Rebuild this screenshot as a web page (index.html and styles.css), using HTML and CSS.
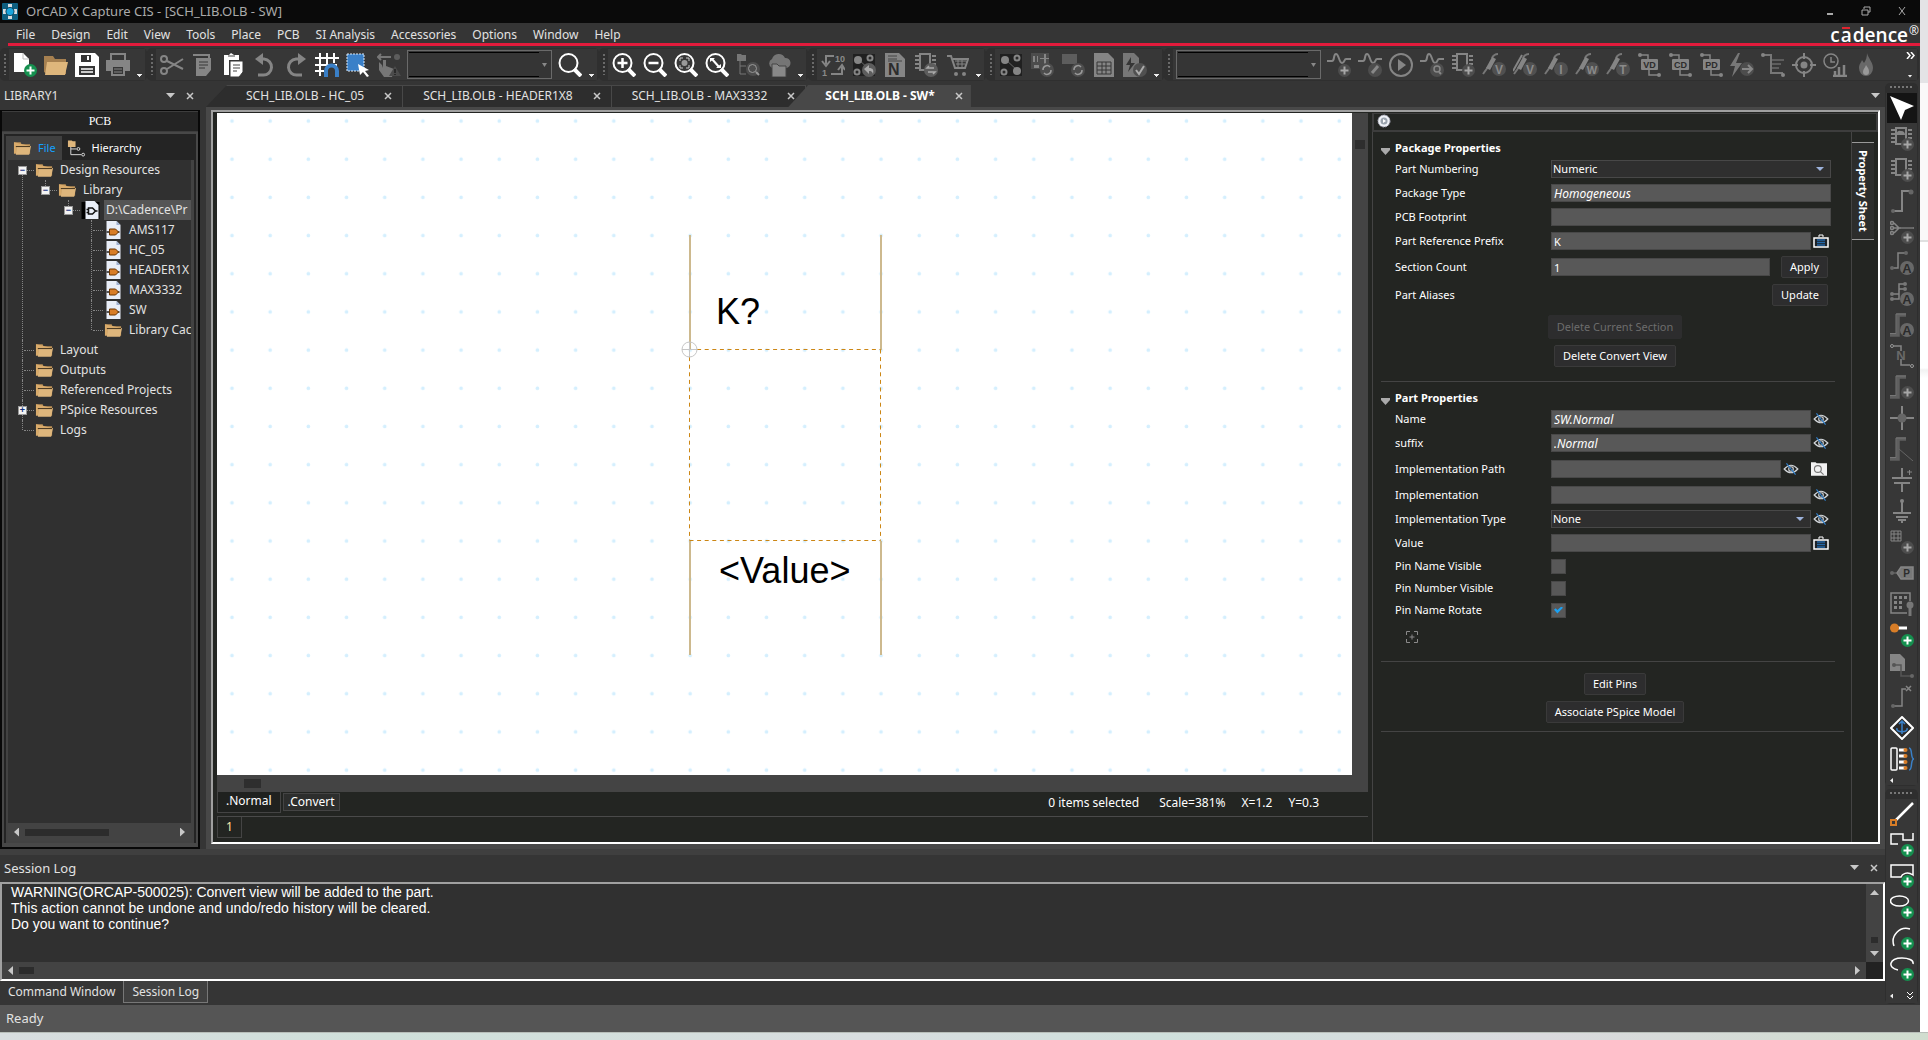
FILE: index.html
```html
<!DOCTYPE html>
<html lang="en">
<head>
<meta charset="utf-8">
<title>OrCAD X Capture CIS - [SCH_LIB.OLB - SW]</title>
<link rel="stylesheet" href="styles.css">
</head>
<body>
<svg class="sprite" aria-hidden="true">
  <defs>
    <symbol id="plus-badge" viewBox="0 0 24 24"><circle cx="17.5" cy="17.500" r="6.500" fill="#4d4d4d"/><path d="M17.500 13.500v8M13.500 17.500h8" stroke="#a6a6a6" stroke-width="2"/></symbol>
    <symbol id="green-badge" viewBox="0 0 24 24"><circle cx="17.500" cy="17.500" r="6.500" fill="#15904f"/><path d="M17.500 13.500v8M13.500 17.500h8" stroke="#fff" stroke-width="2"/></symbol>
    <symbol id="folder" viewBox="0 0 20 16"><path d="M1 2h7l1 2h9v10H3z" fill="#b98f55"/><path d="M1 2v12h2L4 6h14" fill="#d9ab6b"/><path d="M4 6h15l-2 9H3z" fill="#deb67c"/><path d="M3 6.500h15" stroke="#3a2c18"/></symbol>
    <symbol id="i-new" viewBox="0 0 24 24"><path d="M1 0h9l6 6v13H1z" fill="#fff"/><path d="M10 0v6h6" stroke="#bbb" fill="none"/><use href="#green-badge"/></symbol>
    <symbol id="i-open" viewBox="0 0 24 24"><path d="M0 3h9l2 3h11v15H3L0 19z" fill="#a68050"/><path d="M3 9h21l-3 13H1z" fill="#deb67c"/></symbol>
    <symbol id="i-save" viewBox="0 0 24 24"><path d="M0 0h20l4 4v20H0z" fill="#fff"/><path d="M6 2h10v7H6zM4 13h16v9H4z" fill="#363636"/><path d="M12 3h2v4h-2z" fill="#fff"/><path d="M6 16h12M6 19h12" stroke="#fff" stroke-width="1.500"/></symbol>
    <symbol id="i-print" viewBox="0 0 24 24"><path d="M5 7V1h14v6M1 8h22v9h-4v-4H5v4H1z" fill="none" stroke="#858585" stroke-width="2"/><path d="M1 8h22v8H1z" fill="#858585"/><path d="M6 13h12v9H6z" fill="#363636" stroke="#858585" stroke-width="2"/><path d="M8 16h8M8 19h8" stroke="#858585"/></symbol>
    <symbol id="i-cut" viewBox="0 0 24 24"><g fill="none" stroke="#858585" stroke-width="2"><circle cx="4" cy="6" r="3"/><circle cx="4" cy="18" r="3"/><path d="M7 8l16 8M7 16L23 6"/></g></symbol>
    <symbol id="i-copy" viewBox="0 0 24 24"><path d="M2 1h17v17h-2V3H2zM5 5h15v12l-5 6H5z" fill="#858585"/><path d="M8 9h9M8 12h9M8 15h6" stroke="#363636"/></symbol>
    <symbol id="i-paste" viewBox="0 0 24 24"><path d="M2 2h5l2-2 3 2h5v5H7v15H2z" fill="#fff"/><path d="M8 8h13v11l-4 5H8z" fill="#fff" stroke="#363636"/><path d="M6 3h7M11 12h7M11 15h7M11 18h4" stroke="#444"/></symbol>
    <symbol id="i-undo" viewBox="0 0 24 24"><path d="M5 22h5a8 8 0 0 0 1-16H8" fill="none" stroke="#858585" stroke-width="3"/><path d="M10 0v12L2 6z" fill="#858585"/></symbol>
    <symbol id="i-redo" viewBox="0 0 24 24"><path d="M18 22h-5a8 8 0 0 1-1-16h3" fill="none" stroke="#858585" stroke-width="3"/><path d="M14 0v12l8-6z" fill="#858585"/></symbol>
    <symbol id="i-grid" viewBox="0 0 24 24"><path d="M5 0v23M12 0v12M19 0v10M0 5h24M0 12h22M0 18h9" stroke="#fff" stroke-width="2"/><path d="M11 24v-6a5.500 5.500 0 0 1 11 0v6" fill="none" stroke="#3a80c8" stroke-width="4"/></symbol>
    <symbol id="i-select" viewBox="0 0 24 24"><path d="M1 1h17v17H1z" fill="#3a80c8" stroke="#dce9f6" stroke-dasharray="2 1"/><path d="M12 11l11 6-4 1 4 5-2 1-4-5-3 3z" fill="#fff"/></symbol>
    <symbol id="i-hand" viewBox="0 0 24 24"><path d="M5 12l-3-3v8l5 7h8l2-8-8-3V7H6v8z" fill="#777"/><path d="M1 4h13M4 1L1 4l3 3" stroke="#777" stroke-width="2" fill="none"/><circle cx="20" cy="4" r="3" fill="#5d5d5d"/><path d="M18 13l6 10H12z" fill="#4b4b4b"/><path d="M18 16v4M18 21v1" stroke="#2a2a2a" stroke-width="2"/></symbol>
    <symbol id="lens" viewBox="0 0 24 24"><circle cx="10.500" cy="10" r="9" fill="none" stroke="#fff" stroke-width="2"/><path d="M16 16l7 7" stroke="#fff" stroke-width="4"/></symbol>
    <symbol id="i-zin" viewBox="0 0 24 24"><use href="#lens"/><path d="M10.500 5v10M5.500 10h10" stroke="#fff" stroke-width="2.500"/></symbol>
    <symbol id="i-zout" viewBox="0 0 24 24"><use href="#lens"/><path d="M5.500 10h10" stroke="#fff" stroke-width="2.500"/></symbol>
    <symbol id="i-zarea" viewBox="0 0 24 24"><use href="#lens"/><path d="M6 8V5h3M12 5h3v3M15 12v3h-3M9 15H6v-3" fill="none" stroke="#ccc"/><circle cx="10.500" cy="10" r="3" fill="#999"/></symbol>
    <symbol id="i-zall" viewBox="0 0 24 24"><use href="#lens"/><path d="M7 6l7 8" stroke="#fff" stroke-width="2"/><path d="M5 5h5L5 9zM16 15h-5l5-4z" fill="#fff"/></symbol>
    <symbol id="i-hier" viewBox="0 0 24 24"><path d="M1 1h4l1 1h4v6H1z" fill="#777"/><path d="M4 8v13h6M4 13h6" fill="none" stroke="#777"/><circle cx="17" cy="16" r="7" fill="#4d4d4d"/><circle cx="16.500" cy="15.500" r="4" fill="none" stroke="#999"/><path d="M20 19l3 3" stroke="#999" stroke-width="2"/></symbol>
    <symbol id="i-cloud" viewBox="0 0 24 24"><path d="M5 15a5 5 0 0 1 0-9 7 7 0 0 1 13-1 5 5 0 0 1 1 10z" fill="#757575"/><path d="M5 11h5l2 2h7v11H5z" fill="#888" stroke="#444"/></symbol>
    <symbol id="i-annot" viewBox="0 0 24 24"><path d="M13 3H5v8M1 8l4 5 4-5M10 21h11v-7M17 17l4-5 3 5" fill="none" stroke="#858585" stroke-width="2"/><text x="14" y="9" class="glyph" font-size="9">10</text><text x="1" y="23" class="glyph" font-size="9">1</text></symbol>
    <symbol id="nodes" viewBox="0 0 24 24"><path d="M1 1h22v22H1z" fill="#202020"/><path d="M6 6l13 12" stroke="#666"/><g fill="#858585"><circle cx="6" cy="7" r="4"/><circle cx="18" cy="18" r="4"/></g><g fill="#292929" stroke="#858585" stroke-width="2"><circle cx="18" cy="5" r="2.500"/><circle cx="5" cy="19" r="2.500"/></g></symbol>
    <symbol id="i-back" viewBox="0 0 24 24"><use href="#nodes"/><circle cx="17" cy="17" r="7" fill="#5d5d5d"/><path d="M12 16l5-4v3c4 0 5 2 4 6-1-3-2-3-4-3v3z" fill="#aaa"/></symbol>
    <symbol id="i-netlist" viewBox="0 0 24 24"><path d="M2 0h14l6 6v18H2z" fill="#858585"/><path d="M5 3h9M5 6h9M5 8h14" stroke="#444"/><text x="5" y="22" class="glyph dark" font-size="16">N</text></symbol>
    <symbol id="chip" viewBox="0 0 24 24"><path d="M6 1h10v16H6zM1 3h4M1 7h4M1 11h4M1 15h4M18 3h4M18 7h4M18 11h4" fill="none" stroke="#858585" stroke-width="2"/></symbol>
    <symbol id="i-swap" viewBox="0 0 24 24"><use href="#chip"/><circle cx="17" cy="17" r="7" fill="#5d5d5d"/><path d="M20 15h-7l2-2M14 19h7l-2 2" fill="none" stroke="#aaa" stroke-width="1.500"/></symbol>
    <symbol id="i-cart" viewBox="0 0 24 24"><path d="M2 3h4l4 12h10l3-9H8" fill="none" stroke="#858585" stroke-width="2"/><path d="M10 8h11M11 11h9M13 7v7M17 7v7" stroke="#858585"/><circle cx="11" cy="21" r="2" fill="#858585"/><circle cx="19" cy="21" r="2" fill="#858585"/></symbol>
    <symbol id="i-sync1" viewBox="0 0 24 24"><path d="M1 0h18v16H1z" fill="#4c4c4c"/><path d="M3 3h2v6H3zM7 3h1v6H7zM10 5h9v1h-9zM14 1h2v10h-2zM4 12h5v3H4z" fill="#858585"/><use href="#refresh"/></symbol>
    <symbol id="i-sync2" viewBox="0 0 24 24"><path d="M1 1h15v10H1z" fill="#5d5d5d"/><use href="#refresh"/></symbol>
    <symbol id="refresh" viewBox="0 0 24 24"><circle cx="17" cy="17" r="7" fill="#4d4d4d"/><path d="M13 17a4 4 0 0 1 7-3M21 17a4 4 0 0 1-7 3" fill="none" stroke="#999" stroke-width="1.500"/></symbol>
    <symbol id="i-sheet" viewBox="0 0 24 24"><path d="M2 0h14l6 6v18H2z" fill="#858585"/><path d="M5 9h14v12H5zM5 13h14M5 17h14M10 9v12M14 9v12" fill="none" stroke="#363636"/></symbol>
    <symbol id="i-erc" viewBox="0 0 24 24"><path d="M0 0h11l5 5v19H0z" fill="#777"/><path d="M8 4l-5 8h4l-2 7 7-9H8z" fill="#363636"/><circle cx="17" cy="17" r="7" fill="#505050"/><path d="M13 17l3 4 5-8" fill="none" stroke="#aaa" stroke-width="2"/></symbol>
    <symbol id="wave" viewBox="0 0 24 24"><path d="M0 8h5C8 8 6 1 9 1s3 9 6 9 2-4 4-4h5" fill="none" stroke="#858585" stroke-width="2"/></symbol>
    <symbol id="i-wplus" viewBox="0 0 24 24"><use href="#wave"/><use href="#plus-badge"/></symbol>
    <symbol id="i-wedit" viewBox="0 0 24 24"><use href="#wave"/><circle cx="17" cy="17" r="7" fill="#4d4d4d"/><path d="M14 20l6-7" stroke="#888" stroke-width="3"/></symbol>
    <symbol id="i-play" viewBox="0 0 24 24"><circle cx="12" cy="12" r="11" fill="none" stroke="#858585" stroke-width="2"/><path d="M9 6v12l8-6z" fill="#858585"/></symbol>
    <symbol id="i-wfind" viewBox="0 0 24 24"><use href="#wave"/><circle cx="17" cy="17" r="7" fill="#4d4d4d"/><circle cx="17" cy="16" r="3" fill="none" stroke="#888" stroke-width="1.500"/><path d="M19 19l2 2" stroke="#888" stroke-width="2"/></symbol>
    <symbol id="i-chip" viewBox="0 0 24 24"><use href="#chip"/><use href="#plus-badge"/></symbol>
    <symbol id="i-chipcloud" viewBox="0 0 24 24"><use href="#chip"/><path d="M7 8a3 3 0 0 1 4-4c3 0 4 2 4 4z" fill="#858585"/><use href="#plus-badge"/></symbol>
    <symbol id="probe" viewBox="0 0 24 24"><path d="M1 21l5-7M16 1c-3 0-5 2-6 4" fill="none" stroke="#777" stroke-width="2"/><path d="M10 4l4 2-6 11-4-2z" fill="#858585"/><circle cx="17" cy="16" r="7" fill="#505050"/></symbol>
    <symbol id="i-pv" viewBox="0 0 24 24"><use href="#probe"/><text x="17" y="20.500" class="glyph mid" font-size="12">V</text></symbol>
    <symbol id="i-pvv" viewBox="0 0 24 24"><path d="M0 18l9-16" stroke="#858585" stroke-width="2"/><use href="#probe"/><text x="17" y="20.500" class="glyph mid" font-size="12">V</text></symbol>
    <symbol id="i-pi" viewBox="0 0 24 24"><use href="#probe"/><text x="17" y="20.500" class="glyph mid" font-size="12">I</text></symbol>
    <symbol id="i-pw" viewBox="0 0 24 24"><use href="#probe"/><text x="17" y="20.500" class="glyph mid" font-size="11">W</text></symbol>
    <symbol id="i-pt" viewBox="0 0 24 24"><use href="#probe"/><text x="17" y="20.500" class="glyph mid" font-size="12">T</text></symbol>
    <symbol id="disp" viewBox="0 0 24 24"><path d="M3 2h8v4M12 17v5h9" fill="none" stroke="#858585" stroke-width="1.500"/><circle cx="3" cy="2" r="2" fill="#858585"/><circle cx="22" cy="22" r="2" fill="#858585"/><rect x="4" y="6" width="17" height="11" rx="1" fill="#858585"/></symbol>
    <symbol id="i-vd" viewBox="0 0 24 24"><use href="#disp"/><text x="12.500" y="15" class="glyph dark mid" font-size="9">VD</text></symbol>
    <symbol id="i-cd" viewBox="0 0 24 24"><use href="#disp"/><text x="12.500" y="15" class="glyph dark mid" font-size="9">CD</text></symbol>
    <symbol id="i-pd" viewBox="0 0 24 24"><use href="#disp"/><text x="12.500" y="15" class="glyph dark mid" font-size="9">PD</text></symbol>
    <symbol id="i-bolt" viewBox="0 0 24 24"><path d="M8 0L0 13h5L2 24l10-14H6l4-10z" fill="#777"/><circle cx="17" cy="16" r="7" fill="#4d4d4d"/><path d="M12 16h9M18 12l4 4-4 4" fill="none" stroke="#888" stroke-width="2"/></symbol>
    <symbol id="i-net" viewBox="0 0 24 24"><path d="M2 2h8v18h12" fill="none" stroke="#777" stroke-width="2"/><path d="M11 7h12M11 11h9M11 15h7" stroke="#5d5d5d" stroke-width="2"/><circle cx="2" cy="2" r="2" fill="#858585"/><circle cx="22" cy="22" r="2" fill="#858585"/></symbol>
    <symbol id="i-target" viewBox="0 0 24 24"><circle cx="12" cy="12" r="8" fill="none" stroke="#858585" stroke-width="2"/><circle cx="12" cy="12" r="3.500" fill="#858585"/><path d="M12 0v6M12 18v6M0 12h6M18 12h6" stroke="#858585" stroke-width="2"/></symbol>
    <symbol id="i-clock" viewBox="0 0 24 24"><circle cx="8" cy="8" r="7" fill="none" stroke="#858585" stroke-width="1.500"/><path d="M8 4v5h4" fill="none" stroke="#858585" stroke-width="1.500"/><path d="M10 23h14M12 22v-4M16 22v-8M21 22V12" stroke="#858585" stroke-width="2.500"/></symbol>
    <symbol id="i-flame" viewBox="0 0 24 24"><path d="M13 0c1 5 6 9 6 15a7 8 0 0 1-14 0c0-4 2-5 3-8l2 3c2-3 3-6 3-10z" fill="#686868"/><path d="M12 12c2 3 3 4 3 7a3 3 0 0 1-6 0c0-3 2-4 3-7z" fill="#999"/></symbol>
    <symbol id="i-arrow" viewBox="0 0 24 24"><path d="M0 0l24 10-9 4-4 10z" fill="#fff"/></symbol>
    <symbol id="i-wire" viewBox="0 0 24 24"><path d="M3 22h9V2h8" fill="none" stroke="#858585" stroke-width="2"/><circle cx="3" cy="22" r="2" fill="#666"/><circle cx="21" cy="3" r="2.500" fill="#666"/></symbol>
    <symbol id="i-autowire" viewBox="0 0 24 24"><g fill="none" stroke="#858585" stroke-width="1.500"><circle cx="2" cy="3" r="1.500"/><circle cx="2" cy="8" r="1.500"/><circle cx="2" cy="13" r="1.500"/><path d="M4 3l5 5-5 5M3 8h21"/></g><path d="M11 8h12" stroke="#666" stroke-width="2"/><use href="#plus-badge"/></symbol>
    <symbol id="a-badge" viewBox="0 0 24 24"><circle cx="17" cy="17" r="7" fill="#686868"/><text x="17" y="21.500" class="glyph dark mid" font-size="13">A</text></symbol>
    <symbol id="i-wa" viewBox="0 0 24 24"><path d="M1 17h7V2h8" fill="none" stroke="#858585" stroke-width="1.500"/><circle cx="16" cy="2" r="2" fill="#666"/><circle cx="2" cy="17" r="2" fill="#666"/><use href="#a-badge"/></symbol>
    <symbol id="i-waa" viewBox="0 0 24 24"><path d="M2 17h7V2h6M2 12h7M9 7h6" fill="none" stroke="#858585" stroke-width="1.500"/><circle cx="15" cy="2" r="2" fill="#777"/><circle cx="15" cy="7" r="2" fill="#777"/><circle cx="2" cy="12" r="2" fill="#777"/><circle cx="2" cy="17" r="2" fill="#777"/><use href="#a-badge"/></symbol>
    <symbol id="bus" viewBox="0 0 24 24"><path d="M0 22h8V2h8" fill="none" stroke="#5f5f5f" stroke-width="3.500"/><path d="M0 20.500h6V1h10" fill="none" stroke="#777"/></symbol>
    <symbol id="i-busa" viewBox="0 0 24 24"><use href="#bus"/><use href="#a-badge"/></symbol>
    <symbol id="i-nn" viewBox="0 0 24 24"><path d="M4 2h7v5M11 15v6h9" fill="none" stroke="#858585" stroke-width="1.500"/><g fill="none" stroke="#999"><circle cx="2" cy="2" r="1.500"/><circle cx="22" cy="22" r="1.500"/></g><text x="11" y="16" class="glyph mid" font-size="13" opacity=".6">N</text></symbol>
    <symbol id="i-busp" viewBox="0 0 24 24"><use href="#bus"/><use href="#plus-badge"/></symbol>
    <symbol id="i-junc" viewBox="0 0 24 24"><path d="M12 0v24M0 12h24" stroke="#858585" stroke-width="2"/><circle cx="12" cy="12" r="4.500" fill="#666"/></symbol>
    <symbol id="i-busentry" viewBox="0 0 24 24"><use href="#bus"/><path d="M9 12l14 12" stroke="#666"/></symbol>
    <symbol id="i-power" viewBox="0 0 24 24"><path d="M12 0v10M12 15v9M2 10h20M4 15h16" stroke="#858585" stroke-width="2"/><path d="M17 4h5M19.500 2v5" stroke="#858585"/></symbol>
    <symbol id="i-ground" viewBox="0 0 24 24"><path d="M12 2v12M3 14h18M6 18h12M8 21h8M11 23h2" stroke="#858585" stroke-width="2"/><circle cx="12" cy="2" r="2" fill="#858585"/></symbol>
    <symbol id="i-block" viewBox="0 0 24 24"><path d="M1 1h10v10H1zM1 4h10M1 8h10M4 1v10M8 1v10" fill="none" stroke="#858585"/><use href="#plus-badge"/></symbol>
    <symbol id="i-port" viewBox="0 0 24 24"><path d="M7 12l4-6h12v12H11z" fill="#787878" stroke="#858585" stroke-width="1.500"/><path d="M3 12h4" stroke="#777"/><circle cx="2" cy="12" r="2" fill="#666"/><text x="16.500" y="15.500" class="glyph dark mid" font-size="10">P</text></symbol>
    <symbol id="i-hpin" viewBox="0 0 24 24"><path d="M20 9V1H1v20h16" fill="none" stroke="#858585" stroke-width="1.500"/><g fill="#858585"><path d="M4 4h3v3H4zM9 4h3v3H9zM14 4h3v3h-3zM4 9h3v3H4zM9 9h3v3H9zM4 14h3v3H4zM9 14h3v3H9z"/></g><circle cx="20" cy="13" r="3.500" fill="#777"/><path d="M20 13v11" stroke="#777" stroke-width="3"/></symbol>
    <symbol id="i-pin" viewBox="0 0 24 24"><path d="M4 5h13" stroke="#fff" stroke-width="3"/><circle cx="4.500" cy="5" r="4.500" fill="#d87d27"/><use href="#green-badge"/></symbol>
    <symbol id="i-offpage" viewBox="0 0 24 24"><path d="M0 0h10l5 5v12H0z" fill="#858585"/><path d="M4 11h7v11h10" fill="none" stroke="#555" stroke-width="1.500"/><circle cx="4" cy="11" r="2" fill="#555"/><circle cx="22" cy="22" r="2" fill="#666"/></symbol>
    <symbol id="i-nc" viewBox="0 0 24 24"><path d="M3 21h9V4h4" fill="none" stroke="#858585" stroke-width="1.500"/><circle cx="3" cy="21" r="2" fill="#666"/><path d="M16 1l5 5M21 1l-5 5" stroke="#858585" stroke-width="1.500"/></symbol>
    <symbol id="i-ieee" viewBox="0 0 24 24"><path d="M12 1l11 11-11 11L1 12z" fill="#292929" stroke="#fff" stroke-width="2"/><path d="M12 5v13M9 8l3-3 3 3M7 12c-2 5 12 5 10 0" fill="none" stroke="#3a80c8" stroke-width="1.500"/></symbol>
    <symbol id="i-pinarr" viewBox="0 0 24 24"><rect x="1" y="1" width="6" height="22" rx="1" fill="none" stroke="#fff" stroke-width="1.500"/><path d="M9 3h6M9 9h6M9 15h6M9 21h6" stroke="#fff" stroke-width="3"/><g fill="#d87d27"><circle cx="15.500" cy="3" r="2"/><circle cx="15.500" cy="9" r="2"/><circle cx="15.500" cy="15" r="2"/><circle cx="15.500" cy="21" r="2"/></g><path d="M19 1c4 0 1 11 5 11-4 0-1 11-5 11" fill="none" stroke="#3a80c8" stroke-width="1.500"/></symbol>
    <symbol id="i-line" viewBox="0 0 24 24"><path d="M5 19L23 1" stroke="#fff" stroke-width="2.500"/><path d="M1 18h5v5H1z" fill="none" stroke="#d87d27" stroke-width="2"/></symbol>
    <symbol id="i-poly" viewBox="0 0 24 24"><path d="M8 11H1V1h12v6h10V0" fill="none" stroke="#fff" stroke-width="1.500"/><use href="#green-badge"/></symbol>
    <symbol id="i-rect" viewBox="0 0 24 24"><path d="M9 13H1V1h22v10c-6-4-11-1-12 2z" fill="none" stroke="#fff" stroke-width="1.500"/><use href="#green-badge"/></symbol>
    <symbol id="i-ell" viewBox="0 0 24 24"><ellipse cx="9.500" cy="6" rx="9" ry="5" fill="none" stroke="#fff" stroke-width="1.500"/><use href="#green-badge"/></symbol>
    <symbol id="i-arc" viewBox="0 0 24 24"><path d="M4 20A13 13 0 0 1 20 3" fill="none" stroke="#fff" stroke-width="1.500"/><use href="#green-badge"/></symbol>
    <symbol id="i-earc" viewBox="0 0 24 24"><path d="M8 13C-3 11-1 1 12 1c6 0 12 2 11 6" fill="none" stroke="#fff" stroke-width="1.500"/><use href="#green-badge"/></symbol>
    <symbol id="i-part" viewBox="0 0 16 18"><path d="M1 0h10l4 4v14H1z" fill="#e9eef8"/><path d="M11 0v4h4" fill="#9fb0cf"/><path d="M1 11h13" stroke="#222" stroke-width="1.500"/><path d="M4 8h6l3 3-3 3H4z" fill="#d87d27" stroke="#6b3500"/></symbol>
    <symbol id="i-lib" viewBox="0 0 18 18"><path d="M0 1h18v17H0z" fill="#000"/><path d="M4 0h9l4 4v14H4z" fill="#e9eef8"/><path d="M7 7v6h4l3-3-3-3zM5 8.500h2M5 11.500h2M13 10h3" fill="none" stroke="#111" stroke-width="1.500"/></symbol>
    <symbol id="i-tree" viewBox="0 0 20 18"><path d="M1 1h4l1 1h3v6H1z" fill="#deb67c"/><path d="M4 8v8h11M4 10h6" fill="none" stroke="#ddd"/><circle cx="12" cy="10" r="1.500" fill="none" stroke="#ddd"/><circle cx="17" cy="16" r="1.500" fill="none" stroke="#ddd"/></symbol>
    <symbol id="i-eye" viewBox="0 0 14 12"><path d="M1 6q6-6.500 12 0-6 6.500-12 0z" fill="none" stroke="#d0d4d8"/><circle cx="7" cy="6" r="2" fill="none" stroke="#d0d4d8"/><path d="M3 1l8 10" stroke="#2f7fca"/></symbol>
    <symbol id="i-case" viewBox="0 0 16 14"><path d="M1 4h14v9H1z" fill="#1d2328" stroke="#fff" stroke-width="1.500"/><path d="M6 3V1h4v2" fill="none" stroke="#fff"/><path d="M4 6h8M4 8.500h8M4 11h8" stroke="#2468a8" stroke-width="1.500"/></symbol>
    <symbol id="i-browse" viewBox="0 0 14 12"><path d="M0 0h4l1 1h9v11H0z" fill="#f2f2f2"/><circle cx="6" cy="6" r="3" fill="none" stroke="#777"/><path d="M8 8l3 3" stroke="#777"/></symbol>
    <symbol id="i-x" viewBox="0 0 8 8"><path d="M1 1l6 6M7 1L1 7" stroke="#c8c8c8" stroke-width="1.500"/></symbol>
  </defs>
</svg>

<div class="app">
  <header class="titlebar">
    <svg class="app-icon" viewBox="0 0 16 17"><rect width="16" height="17" rx="1" fill="#0e5f80"/><path d="M6 1h4v15H6zM1 6h14v5H1z" fill="#d8dde0"/><circle cx="8" cy="8.500" r="4.500" fill="#0b4560"/><circle cx="8" cy="8.500" r="3.500" fill="#19a5dd"/></svg>
    <h1>OrCAD X Capture CIS - [SCH_LIB.OLB - SW]</h1>
    <div class="win-buttons">
      <button aria-label="Minimize"><svg viewBox="0 0 10 10"><path d="M2 8h6" stroke="#aaa" stroke-width="2"/></svg></button>
      <button aria-label="Restore"><svg viewBox="0 0 10 10"><path d="M3 3V1h6v5H7M1 4h6v5H1z" fill="none" stroke="#aaa"/></svg></button>
      <button aria-label="Close"><svg viewBox="0 0 10 10"><path d="M2 1l6 8M8 1L2 9" stroke="#aaa"/></svg></button>
    </div>
  </header>

  <nav class="menubar">
    <button>File</button><button>Design</button><button>Edit</button><button>View</button><button>Tools</button><button>Place</button><button>PCB</button><button>SI Analysis</button><button>Accessories</button><button>Options</button><button>Window</button><button>Help</button>
    <span class="brand"><span>c</span><span class="macron">a</span><span>dence</span><sup>®</sup></span>
  </nav>

  <div class="toolbar">
    <div class="tgroup"><i class="grip"></i><div class="tools">
      <button aria-label="New"><svg><use href="#i-new"/></svg></button>
      <button aria-label="Open"><svg><use href="#i-open"/></svg></button>
      <button aria-label="Save"><svg><use href="#i-save"/></svg></button>
      <button aria-label="Print"><svg><use href="#i-print"/></svg></button>
      <i class="more"></i></div></div>
    <div class="tgroup"><i class="grip"></i><div class="tools">
      <button aria-label="Cut"><svg><use href="#i-cut"/></svg></button>
      <button aria-label="Copy"><svg><use href="#i-copy"/></svg></button>
      <button aria-label="Paste"><svg><use href="#i-paste"/></svg></button>
      <button aria-label="Undo"><svg><use href="#i-undo"/></svg></button>
      <button aria-label="Redo"><svg><use href="#i-redo"/></svg></button>
      <button aria-label="Snap to grid"><svg><use href="#i-grid"/></svg></button>
      <button aria-label="Area select"><svg><use href="#i-select"/></svg></button>
      <button aria-label="Drag connected object"><svg><use href="#i-hand"/></svg></button>
      <span class="combo"><select aria-label="Search text"><option></option></select></span>
      <button aria-label="Search"><svg><use href="#lens"/></svg></button>
      <i class="more"></i></div></div>
    <div class="tgroup"><i class="grip"></i><div class="tools">
      <button aria-label="Zoom in"><svg><use href="#i-zin"/></svg></button>
      <button aria-label="Zoom out"><svg><use href="#i-zout"/></svg></button>
      <button aria-label="Zoom to region"><svg><use href="#i-zarea"/></svg></button>
      <button aria-label="Zoom to all"><svg><use href="#i-zall"/></svg></button>
      <button aria-label="Find in hierarchy"><svg><use href="#i-hier"/></svg></button>
      <button aria-label="Workspace"><svg><use href="#i-cloud"/></svg></button>
      <i class="more"></i></div></div>
    <div class="tgroup"><i class="grip"></i><div class="tools">
      <button aria-label="Annotate"><svg><use href="#i-annot"/></svg></button>
      <button aria-label="Back annotate"><svg><use href="#i-back"/></svg></button>
      <button aria-label="Create netlist"><svg><use href="#i-netlist"/></svg></button>
      <button aria-label="Swap part"><svg><use href="#i-swap"/></svg></button>
      <button aria-label="Bill of materials"><svg><use href="#i-cart"/></svg></button>
      <i class="more"></i></div></div>
    <div class="tgroup"><i class="grip"></i><div class="tools">
      <button aria-label="New layout"><svg><use href="#nodes"/></svg></button>
      <button aria-label="Sync layout"><svg><use href="#i-sync1"/></svg></button>
      <button aria-label="Sync schematic"><svg><use href="#i-sync2"/></svg></button>
      <button aria-label="Properties table"><svg><use href="#i-sheet"/></svg></button>
      <button aria-label="Design rule check"><svg><use href="#i-erc"/></svg></button>
      <i class="more"></i></div></div>
    <div class="tgroup grow"><i class="grip"></i><div class="tools">
      <span class="combo"><select aria-label="Simulation profile"><option></option></select></span>
      <button aria-label="New simulation"><svg><use href="#i-wplus"/></svg></button>
      <button aria-label="Edit simulation"><svg><use href="#i-wedit"/></svg></button>
      <button aria-label="Run"><svg><use href="#i-play"/></svg></button>
      <button aria-label="View results"><svg><use href="#i-wfind"/></svg></button>
      <button aria-label="Place PSpice part"><svg><use href="#i-chip"/></svg></button>
      <button aria-label="Voltage marker"><svg><use href="#i-pv"/></svg></button>
      <button aria-label="Differential marker"><svg><use href="#i-pvv"/></svg></button>
      <button aria-label="Current marker"><svg><use href="#i-pi"/></svg></button>
      <button aria-label="Power marker"><svg><use href="#i-pw"/></svg></button>
      <button aria-label="Temperature marker"><svg><use href="#i-pt"/></svg></button>
      <button aria-label="Voltage display"><svg><use href="#i-vd"/></svg></button>
      <button aria-label="Current display"><svg><use href="#i-cd"/></svg></button>
      <button aria-label="Power display"><svg><use href="#i-pd"/></svg></button>
      <button aria-label="Bias points"><svg><use href="#i-bolt"/></svg></button>
      <button aria-label="Net list"><svg><use href="#i-net"/></svg></button>
      <button aria-label="Sensitivity"><svg><use href="#i-target"/></svg></button>
      <button aria-label="Time domain"><svg><use href="#i-clock"/></svg></button>
      <button aria-label="Smoke"><svg><use href="#i-flame"/></svg></button>
      <span class="overflow"><svg viewBox="0 0 9 7"><path d="M1 0l3 3.500L1 7M5 0l3 3.500L5 7" fill="none" stroke="#fff" stroke-width="1.500"/></svg><i></i></span></div></div>
  </div>

  <div class="body">
    <div class="work">
      <div class="upper">
        <aside class="library">
          <div class="dock-head"><span>LIBRARY1</span><i class="caret"></i><button aria-label="Close library"><svg><use href="#i-x"/></svg></button></div>
          <div class="lib-panel">
            <div class="lib-title">PCB</div>
            <div class="lib-body">
              <div class="lib-tabs">
                <button class="on"><svg><use href="#folder"/></svg>File</button>
                <button><svg><use href="#i-tree"/></svg>Hierarchy</button>
              </div>
              <div class="tree-box">
              <ul class="tree">
                <li><div class="node"><button class="exp" aria-label="Collapse">−</button><svg><use href="#folder"/></svg><span>Design Resources</span></div>
                  <ul><li><div class="node"><button class="exp" aria-label="Collapse">−</button><svg><use href="#folder"/></svg><span>Library</span></div>
                    <ul><li><div class="node"><button class="exp" aria-label="Collapse">−</button><svg><use href="#i-lib"/></svg><span class="sel">D:\Cadence\Pr</span></div>
                      <ul>
                        <li><div class="node"><svg><use href="#i-part"/></svg><span>AMS117</span></div></li>
                        <li><div class="node"><svg><use href="#i-part"/></svg><span>HC_05</span></div></li>
                        <li><div class="node"><svg><use href="#i-part"/></svg><span>HEADER1X</span></div></li>
                        <li><div class="node"><svg><use href="#i-part"/></svg><span>MAX3332</span></div></li>
                        <li><div class="node"><svg><use href="#i-part"/></svg><span>SW</span></div></li>
                        <li><div class="node"><svg><use href="#folder"/></svg><span>Library Cac</span></div></li>
                      </ul></li></ul></li></ul></li>
                <li><div class="node"><svg><use href="#folder"/></svg><span>Layout</span></div></li>
                <li><div class="node"><svg><use href="#folder"/></svg><span>Outputs</span></div></li>
                <li><div class="node"><svg><use href="#folder"/></svg><span>Referenced Projects</span></div></li>
                <li><div class="node"><button class="exp" aria-label="Expand">+</button><svg><use href="#folder"/></svg><span>PSpice Resources</span></div></li>
                <li><div class="node"><svg><use href="#folder"/></svg><span>Logs</span></div></li>
              </ul>
              <div class="hscroll"><i class="left"></i><b></b><i class="right"></i></div>
              </div>
            </div>
          </div>
        </aside>

        <main class="docs">
          <div class="doc-tabs">
            <div class="dtab first"><span>SCH_LIB.OLB - HC_05</span><button aria-label="Close tab"><svg><use href="#i-x"/></svg></button></div>
            <div class="dtab"><span>SCH_LIB.OLB - HEADER1X8</span><button aria-label="Close tab"><svg><use href="#i-x"/></svg></button></div>
            <div class="dtab"><span>SCH_LIB.OLB - MAX3332</span><button aria-label="Close tab"><svg><use href="#i-x"/></svg></button></div>
            <div class="dtab active"><span>SCH_LIB.OLB - SW*</span><button aria-label="Close tab"><svg><use href="#i-x"/></svg></button></div>
            <i class="caret"></i>
          </div>
          <div class="doc-frame">
            <section class="editor">
              <div class="canvas-row">
                <svg class="canvas">
                  <defs><pattern id="dots" x="-4" y="-11" width="38.180" height="38.180" patternUnits="userSpaceOnUse"><circle cx="19" cy="19" r="1.800" fill="#d4effe"/></pattern></defs>
                  <rect width="100%" height="100%" fill="#fff"/>
                  <rect width="100%" height="100%" fill="url(#dots)"/>
                  <path d="M473 122v115M664 122v115M473 428v114M664 428v114" stroke="#cdb98e" stroke-width="2"/>
                  <path d="M472.500 236.500h191M472.500 427.500h191M472.500 236.500v191M663.500 236.500v191" fill="none" stroke="#cc8614" stroke-dasharray="4 3.600"/>
                  <circle cx="472.500" cy="236.500" r="7.500" fill="none" stroke="#c6c6c6"/><path d="M465 236.500h15M472.500 229v15" stroke="#c6c6c6"/>
                  <text x="499" y="211">K?</text><text x="502" y="470">&lt;Value&gt;</text>
                </svg>
                <div class="canvas-v"><b></b></div>
              </div>
              <div class="canvas-h"><b></b></div>
              <div class="view-row">
                <button class="on">.Normal</button><button>.Convert</button>
                <div class="readout"><span>0 items selected</span><span>Scale=381%</span><span>X=1.2</span><span>Y=0.3</span></div>
              </div>
              <div class="page-row"><button>1</button></div>
            </section>

            <section class="props">
              <div class="props-head"><svg viewBox="0 0 14 14"><circle cx="7" cy="7" r="6" fill="#eef1f6" stroke="#aab" stroke-dasharray="2 1"/><circle cx="7" cy="7" r="3.500" fill="#9aa3ad"/><path d="M6 5v4l3-2z" fill="#fff"/></svg></div>
              <div class="props-main">
                <form class="form">
                  <h2>Package Properties</h2>
                  <div class="row"><label for="numbering">Part Numbering</label><span class="pick"><select id="numbering"><option>Numeric</option></select></span></div>
                  <div class="row"><label for="ptype">Package Type</label><input id="ptype" class="it" value="Homogeneous"></div>
                  <div class="row"><label for="foot">PCB Footprint</label><input id="foot"></div>
                  <div class="row"><label for="prefix">Part Reference Prefix</label><input id="prefix" value="K"><svg class="ic"><use href="#i-case"/></svg></div>
                  <div class="row tall"><label for="count">Section Count</label><input id="count" value="1"><button type="button" class="btn end">Apply</button></div>
                  <div class="row tall"><span class="lbl">Part Aliases</span><button type="button" class="btn end">Update</button></div>
                  <div class="mid-buttons"><button type="button" class="btn wide" disabled>Delete Current Section</button><button type="button" class="btn">Delete Convert View</button></div>
                  <hr>
                  <h2>Part Properties</h2>
                  <div class="row"><label for="name">Name</label><input id="name" class="it" value="SW.Normal"><svg class="ic"><use href="#i-eye"/></svg></div>
                  <div class="row"><label for="suffix">suffix</label><input id="suffix" class="it" value=".Normal"><svg class="ic"><use href="#i-eye"/></svg></div>
                  <div class="row tall"><label for="path">Implementation Path</label><input id="path"><svg class="ic"><use href="#i-eye"/></svg><svg class="ic far"><use href="#i-browse"/></svg></div>
                  <div class="row"><label for="impl">Implementation</label><input id="impl"><svg class="ic"><use href="#i-eye"/></svg></div>
                  <div class="row"><label for="itype">Implementation Type</label><span class="pick"><select id="itype"><option>None</option></select></span><svg class="ic"><use href="#i-eye"/></svg></div>
                  <div class="row"><label for="value">Value</label><input id="value"><svg class="ic"><use href="#i-case"/></svg></div>
                  <div class="row short"><label for="pnv">Pin Name Visible</label><input type="checkbox" id="pnv"></div>
                  <div class="row short"><label for="pnum">Pin Number Visible</label><input type="checkbox" id="pnum"></div>
                  <div class="row short"><label for="pnr">Pin Name Rotate</label><input type="checkbox" id="pnr" checked></div>
                  <button type="button" class="add" aria-label="Add property"><svg viewBox="0 0 12 12"><path d="M4 .500H.500V4M8 .500h3.500V4M4 11.500H.500V8M8 11.500h3.500V8M6 3.500v5M3.500 6h5" fill="none" stroke="#8a8a8a"/></svg></button>
                  <hr>
                  <div class="foot-buttons"><button type="button" class="btn">Edit Pins</button><button type="button" class="btn">Associate PSpice Model</button></div>
                  <hr class="long">
                </form>
                <div class="side"><button>Property Sheet</button></div>
              </div>
            </section>
          </div>
        </main>
      </div>

      <section class="session">
        <div class="dock-head"><span>Session Log</span><i class="caret"></i><button aria-label="Close log"><svg><use href="#i-x"/></svg></button></div>
        <div class="log">
          <div class="log-text">WARNING(ORCAP-500025): Convert view will be added to the part.<br>This action cannot be undone and undo/redo history will be cleared.<br>Do you want to continue?</div>
          <div class="vscroll"><i class="up"></i><b></b><i class="down"></i></div>
          <div class="hscroll"><i class="left"></i><b></b><i class="right"></i></div>
          <div class="corner"></div>
        </div>
        <div class="log-tabs"><button>Command Window</button><button class="on">Session Log</button></div>
      </section>
    </div>

    <aside class="palette">
      <div class="pgroup"><i class="vgrip"></i><div class="ptools">
        <button class="on" aria-label="Select"><svg><use href="#i-arrow"/></svg></button>
        <button aria-label="Search parts"><svg><use href="#i-chipcloud"/></svg></button>
        <button aria-label="Place part"><svg><use href="#i-chip"/></svg></button>
        <button aria-label="Place wire"><svg><use href="#i-wire"/></svg></button>
        <button aria-label="Auto wire"><svg><use href="#i-autowire"/></svg></button>
        <button aria-label="Net alias"><svg><use href="#i-wa"/></svg></button>
        <button aria-label="Net aliases"><svg><use href="#i-waa"/></svg></button>
        <button aria-label="Bus alias"><svg><use href="#i-busa"/></svg></button>
        <button aria-label="Net group"><svg><use href="#i-nn"/></svg></button>
        <button aria-label="Place bus"><svg><use href="#i-busp"/></svg></button>
        <button aria-label="Junction"><svg><use href="#i-junc"/></svg></button>
        <button aria-label="Bus entry"><svg><use href="#i-busentry"/></svg></button>
        <button aria-label="Power"><svg><use href="#i-power"/></svg></button>
        <button aria-label="Ground"><svg><use href="#i-ground"/></svg></button>
        <button aria-label="Hierarchical block"><svg><use href="#i-block"/></svg></button>
        <button aria-label="Port"><svg><use href="#i-port"/></svg></button>
        <button aria-label="Hierarchical pin"><svg><use href="#i-hpin"/></svg></button>
        <button aria-label="Place pin"><svg><use href="#i-pin"/></svg></button>
        <button aria-label="Off-page connector"><svg><use href="#i-offpage"/></svg></button>
        <button aria-label="No connect"><svg><use href="#i-nc"/></svg></button>
        <button aria-label="IEEE symbol"><svg><use href="#i-ieee"/></svg></button>
        <button aria-label="Pin array"><svg><use href="#i-pinarr"/></svg></button>
        <span class="pmore"><i></i></span></div></div>
      <div class="pgroup"><i class="vgrip"></i><div class="ptools">
        <button aria-label="Line"><svg><use href="#i-line"/></svg></button>
        <button aria-label="Polyline"><svg><use href="#i-poly"/></svg></button>
        <button aria-label="Rectangle"><svg><use href="#i-rect"/></svg></button>
        <button aria-label="Ellipse"><svg><use href="#i-ell"/></svg></button>
        <button aria-label="Arc"><svg><use href="#i-arc"/></svg></button>
        <button aria-label="Elliptical arc"><svg><use href="#i-earc"/></svg></button>
        <span class="pmore last"><i></i><svg viewBox="0 0 6 8"><path d="M0 0l3 3 3-3M0 4l3 3 3-3" fill="none" stroke="#fff"/></svg></span></div></div>
    </aside>
  </div>
  <footer class="status">Ready</footer>
</div>
<div class="behind-right"></div>
<div class="behind-bottom"></div>
</body>
</html>
```
FILE: styles.css
```css
* { box-sizing: border-box; }
body {
  margin: 0; min-height: 100vh; display: grid;
  grid-template: 1fr 8px / 1fr 8px;
  font: 12px/16px "Noto Sans", "Open Sans", sans-serif; color: #e2e2e2; background: #fff;
}
button { background: none; border: 0; padding: 0; color: inherit; font: inherit; display: flex; align-items: center; justify-content: center; }
input, select { font: inherit; color: inherit; margin: 0; border-radius: 0; appearance: none; }
svg { display: block; flex: none; }
h1, h2 { margin: 0; font: inherit; }
ul { margin: 0; padding: 0; list-style: none; }
.sprite { position: absolute; width: 0; height: 0; }
.glyph { font-family: "Liberation Sans", sans-serif; font-weight: bold; fill: #8a8a8a; }
.glyph.dark { fill: #2c2c2c; }
.glyph.mid { text-anchor: middle; }

.app { display: flex; flex-direction: column; min-width: 0; background: #353535; }
.behind-right { background: linear-gradient(#e4e3e6 83px, #faf8f9 83px 240px, #e0e0e0 240px 242px, #fff 242px 368px, #f2f2f2 370px, #fff 378px); }
.behind-bottom { grid-column: 1 / 3; border-top: 1px solid #b8beb9; background: linear-gradient(90deg, #d8dddf, #cfe0da 20%, #d8dddf 45%, #cfe0dc 60%, #dadade 80%, #d0ddcf); }

.titlebar { flex: none; height: 23px; display: flex; align-items: center; gap: 8px; padding: 0 8px 1px 2px; background: #0a0a0a; color: #aaa; font-size: 13px; }
.app-icon { width: 16px; height: 17px; }
.win-buttons { margin-left: auto; display: flex; gap: 16px; }
.win-buttons button { width: 20px; height: 20px; }
.win-buttons svg { width: 10px; height: 10px; }

.menubar { flex: none; height: 20px; display: flex; align-items: center; gap: 16px; padding: 3px 1px 0 16px; }
.brand { margin-left: auto; display: flex; align-items: baseline; font: 600 19px/16px "Open Sans", sans-serif; color: #fff; gap: 1px; }
.brand sup { font-size: 12px; line-height: 8px; align-self: flex-start; font-weight: 400; }
.macron { background: linear-gradient(#e0242f, #e0242f) 1px 0 / 8px 2px no-repeat; }

.toolbar { flex: none; display: flex; height: 40px; padding: 2px 1px 2px 0; position: relative; border-top: 3px solid #e31b3c; }
.toolbar::before { content: ""; position: absolute; left: 0; top: -3px; width: 8px; height: 3px; background: #353535; }
.tgroup { display: flex; padding: 1px 2px 1px 1px; border-radius: 5px; background: #2f2f2f; }
.tgroup.grow { flex: 1; }
.grip { flex: none; width: 2px; margin: 5px 3px; background: repeating-linear-gradient(#6a6a6a 0 2px, transparent 2px 4px); }
.tools { flex: 1; display: flex; align-items: center; gap: 7px; padding-left: 4px; background: #373737; }
.tools button, .tools button svg { width: 24px; height: 24px; }
.more { width: 8px; height: 24px; background: linear-gradient(#eee, #eee) 0 21px / 5px 1px no-repeat, linear-gradient(#eee, #eee) 1px 22px / 3px 1px no-repeat, linear-gradient(#eee, #eee) 2px 23px / 1px 1px no-repeat; }
.overflow { margin-left: auto; width: 14px; height: 26px; display: flex; flex-direction: column; justify-content: space-between; align-items: center; }
.overflow svg { width: 9px; height: 7px; }
.overflow i { width: 5px; height: 3px; background: #eee; clip-path: polygon(0 0, 100% 0, 50% 100%); }
.combo { position: relative; margin: 0 -1px; }
.combo select { display: block; width: 145px; height: 29px; border: 1px solid #6a6a6a; background: linear-gradient(#000, #000) 1px 1px / 130px 1px no-repeat, linear-gradient(#000, #000) 1px 25px / 130px 1px no-repeat, #353535; }
.combo::after { content: ""; position: absolute; right: 5px; top: 13px; width: 5px; height: 4px; background: #888; clip-path: polygon(0 0, 100% 0, 50% 100%); }

.body { flex: 1; display: flex; min-height: 0; }
.work { flex: 1; display: flex; flex-direction: column; min-width: 0; }
.upper { flex: 1; display: flex; min-height: 0; border-bottom: 6px solid #3f3f3f; }

.dock-head { height: 27px; display: flex; align-items: center; padding: 0 4px 2px; gap: 11px; font-size: 13px; }
.dock-head span { margin-right: auto; }
.dock-head svg, .dtab svg { width: 8px; height: 8px; }
.caret { width: 9px; height: 5px; background: #c8c8c8; clip-path: polygon(0 0, 100% 0, 50% 100%); }

.library { width: 206px; flex: none; padding-right: 6px; display: flex; flex-direction: column; }
.library .dock-head { padding-right: 6px; font-size: 12px; }
.lib-panel { flex: 1; border: 2px solid #080808; border-top-width: 1px; display: flex; flex-direction: column; min-height: 0; }
.lib-title { height: 21px; border: 1px solid #3d3d3d; border-width: 1px 0; background: #242424; text-align: center; color: #fff; font: 12px/18px "Liberation Serif", serif; }
.lib-body { flex: 1; display: flex; flex-direction: column; border: 2px solid #484848; border-bottom-width: 4px; padding: 2px 2px 0; background: #242424; min-height: 0; }
.lib-tabs { display: flex; height: 24px; gap: 2px; color: #fff; font-size: 11px; }
.lib-tabs button { gap: 6px; padding: 0 6px 0 7px; justify-content: flex-start; }
.lib-tabs button + button { padding-left: 3px; }
.lib-tabs .on { background: #404040; color: #14a0ff; }
.lib-tabs svg { width: 19px; height: 18px; }
.tree-box { flex: 1; display: flex; flex-direction: column; border: 2px solid #424242; border-width: 0 3px 2px 2px; background: #303030; min-height: 0; }
.tree { flex: 1; overflow: hidden; padding: 0 0 0 10px; font-size: 12px; line-height: 20px; white-space: nowrap; }
.tree ul { padding-left: 23px; }
.tree li { position: relative; }
.tree li::before { content: ""; position: absolute; left: 4px; top: 0; bottom: 0; border-left: 1px dotted #858585; }
.tree li:last-child::before { bottom: auto; height: 10px; }
.tree > li:first-child::before { top: 10px; }
.tree li::after { content: ""; position: absolute; left: 6px; top: 10px; width: 10px; border-top: 1px dotted #858585; }
.node { position: relative; z-index: 1; display: flex; align-items: center; height: 20px; padding-left: 17px; }
.exp { width: 9px; height: 9px; margin: 0 8px 0 -17px; border: 1px solid #999; background: #f4f4f4; color: #10307c; font: bold 9px/7px "Liberation Sans", sans-serif; flex: none; }
.node svg { width: 19px; height: 18px; margin-right: 4px; }
.node span { padding: 0 2px; }
.node .sel { background: #555; flex: 1; }
.hscroll { display: flex; align-items: center; height: 18px; background: #434343; padding: 0 6px; }
.hscroll b { width: 84px; height: 7px; margin: 0 auto 0 6px; background: #2c2c2c; }
.left, .right { width: 5px; height: 9px; background: #c8c8c8; clip-path: polygon(100% 0, 100% 100%, 0 50%); }
.right { transform: scaleX(-1); }

.docs { flex: 1; display: flex; flex-direction: column; min-width: 0; }
.doc-tabs { height: 24px; display: flex; align-items: stretch; padding: 2px 5px 0 0; }
.doc-tabs > .caret { margin: 8px 0 0 auto; }
.dtab { display: flex; align-items: center; gap: 20px; padding: 0 10px 1px 20px; background: #2d2d2d; border-top: 1px solid #484848; border-right: 1px solid #484848; }
.dtab.first { padding-left: 40px; clip-path: polygon(21px 0, 100% 0, 100% 100%, 0 100%); }
.dtab.active { margin-left: -18px; padding: 0 7px 1px 37px; background: #484848; font-weight: 700; color: #fff; clip-path: polygon(20px 0, 100% 0, 100% 100%, 0 100%); }
.doc-frame { flex: 1; display: flex; min-height: 0; border: 5px solid #484848; border-top-width: 3px; background: #232522; position: relative; }
.doc-frame::after { content: ""; position: absolute; inset: 0; border: 2px solid #fff; border-top-color: #a0a0a0; border-left-color: #a0a0a0; pointer-events: none; }
.editor { flex: 1; display: flex; flex-direction: column; min-width: 0; padding: 3px 0 2px 6px; }
.canvas-row { flex: 1; display: flex; min-height: 0; }
.canvas { flex: 1; width: 0; height: 100%; font: 36px "Liberation Sans", sans-serif; }
.canvas-v { width: 16px; background: #444; padding: 27px 3px; }
.canvas-v b { display: block; height: 9px; background: #2e2e2e; }
.canvas-h { height: 17px; background: #444; padding: 4px 27px; }
.canvas-h b { display: block; width: 17px; height: 9px; background: #2e2e2e; }
.view-row { height: 25px; display: flex; gap: 2px; border-bottom: 1px solid #4a4a4a; color: #fff; align-items: flex-start; }
.view-row button { height: 18px; margin-top: 1px; padding: 0 4px; border: 1px solid #444; background: #2d2e2d; }
.view-row .on { height: 21px; margin: 0; padding: 0 8px 2px; background: #1f211f; border-top: 0; }
.readout { margin: 3px 49px 0 auto; display: flex; gap: 16px; }
.readout span:first-child { margin-right: 4px; }
.page-row { height: 25px; padding-bottom: 4px; display: flex; color: #fff; }
.page-row button { width: 25px; border: 1px solid #444; border-top: 0; color: #ffe9a8; }

.props { width: 512px; flex: none; display: flex; flex-direction: column; padding: 3px 2px 2px 4px; color: #fff; font-size: 11px; }
.props-head { height: 19px; border: 2px solid #3d3d3d; border-top-width: 1px; padding: 0 3px; }
.props-head svg { width: 14px; height: 14px; }
.props-main { flex: 1; display: flex; min-height: 0; }
.form { flex: 1; border: 1px solid #444; border-width: 0 1px; padding: 4px 20px 0 22px; }
.form h2 { position: relative; height: 21px; line-height: 24px; font-weight: 700; }
.form h2::before { content: ""; position: absolute; left: -14px; top: 12px; width: 9px; height: 7px; background: #aaa; clip-path: polygon(0 0, 100% 0, 100% 30%, 50% 100%, 0 30%); }
.row { display: flex; align-items: center; height: 24px; }
.row.tall { height: 28px; }
.row.short { height: 22px; }
.row label, .row .lbl { width: 156px; flex: none; }
.row input, .pick { flex: 1; min-width: 0; height: 18px; border: 1px solid #484848; background: #585858; padding: 0 2px; outline: 0; }
.row .it { font-style: italic; font-size: 12px; }
.pick { position: relative; padding: 0; background: #2f2f2f; display: flex; }
.pick select { flex: 1; border: 0; background: none; padding: 0 1px; }
.pick::after { content: ""; position: absolute; right: 6px; top: 6px; width: 8px; height: 4px; background: #9db2dc; clip-path: polygon(0 0, 100% 0, 50% 100%); }
.row input[type=checkbox] { flex: none; width: 15px; height: 15px; padding: 0; display: flex; align-items: center; justify-content: center; }
.row input[type=checkbox]:checked::after { content: ""; width: 9px; height: 7px; background: #1ba1f2; clip-path: polygon(0 45%, 18% 25%, 38% 50%, 82% 0, 100% 18%, 38% 100%); }
.ic { width: 16px; height: 14px; margin: 0 2px; }
.ic.far { margin-left: 10px; margin-right: 4px; }
.btn { height: 22px; padding: 0 8px; border: 1px solid #3a3a3a; border-radius: 2px; background: #2d2d2e; }
.btn:disabled { color: #6c6c6c; border-color: #2d2d2e; }
.btn.end { margin: 0 3px 0 auto; }
.row input + .btn.end { margin-left: 11px; }
.btn.wide { height: 24px; }
.mid-buttons, .foot-buttons { display: flex; flex-direction: column; align-items: center; gap: 6px; padding-left: 4px; }
.mid-buttons { padding-top: 6px; }
.form hr { height: 1px; border: 0; background: #444; margin: 14px -4px 4px -14px; }
.add { width: 12px; height: 12px; margin: 10px 0 18px 11px; }
.add svg { width: 12px; height: 12px; }
.add + hr { margin-bottom: 11px; }
.form hr.long { margin: 8px -13px 0 -14px; }
.side { width: 26px; padding-top: 10px; }
.side button { writing-mode: vertical-rl; width: 22px; height: 98px; border: 1px solid #999; border-width: 1px 0; background: #2c2d2c; font-weight: 700; }

.session .dock-head { padding-right: 7px; }
.log { display: grid; grid-template: 1fr 17px / 1fr 17px; height: 99px; border: 2px solid #a0a0a0; border-right-color: #fff; border-bottom-color: #fff; background: #303030; }
.log-text { padding: 0 9px; color: #fff; font: 14px/16px "Liberation Sans", sans-serif; }
.log .hscroll { height: 17px; }
.log .hscroll b { width: 15px; }
.vscroll { display: flex; flex-direction: column; align-items: center; padding: 6px 0; background: #434343; }
.vscroll b { width: 7px; height: 6px; background: #2c2c2c; margin: auto 0 8px; }
.up, .down { width: 9px; height: 5px; background: #c8c8c8; clip-path: polygon(0 0, 100% 0, 50% 100%); }
.up { transform: scaleY(-1); }
.corner { background: #222; }
.log-tabs { display: flex; height: 24px; padding-bottom: 2px; }
.log-tabs button { padding: 0 8px; }
.log-tabs .on { border: 1px solid #777; border-top: 0; background: #404040; }
.status { flex: none; height: 27px; padding: 0 6px; background: #555; line-height: 27px; font-size: 13px; }

.palette { flex: none; width: 35px; padding: 0 2px 0 0; display: flex; flex-direction: column; gap: 3px; background: #353535; }
.pgroup { padding: 3px 1px 1px; border-radius: 5px; background: #2e2e2e; }
.vgrip { display: block; width: 24px; height: 2px; margin: 0 auto 5px; background: repeating-linear-gradient(90deg, #777 0 2px, transparent 2px 4px); }
.ptools { display: flex; flex-direction: column; align-items: center; gap: 7px; padding: 3px 0 2px; background: #373737; }
.ptools button, .ptools button svg { width: 24px; height: 24px; }
.ptools .on { background: #141414; outline: 3px solid #141414; }
.pmore { align-self: stretch; height: 5px; display: flex; align-items: center; justify-content: space-between; padding: 0 4px; }
.pmore i { width: 3px; height: 5px; background: #eee; clip-path: polygon(100% 0, 100% 100%, 0 50%); }
.pmore svg { width: 6px; height: 8px; }
.pmore.last { height: 10px; margin-top: 3px; }
```
